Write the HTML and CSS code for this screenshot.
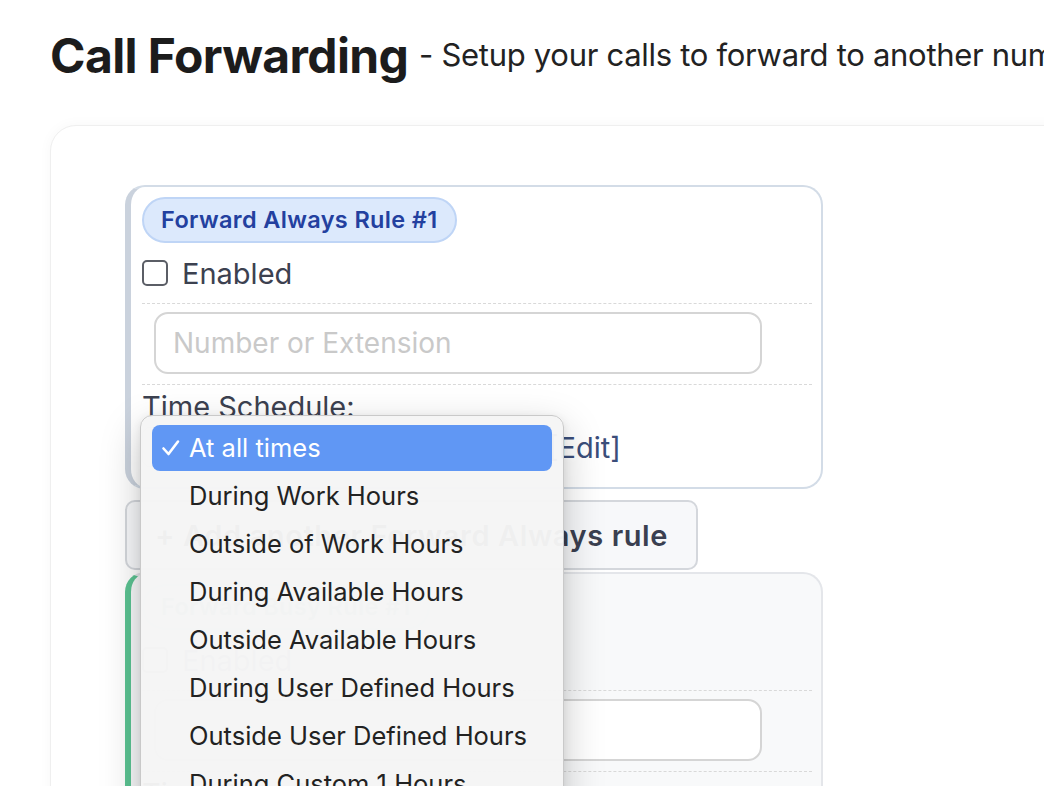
FILE: index.html
```html
<!DOCTYPE html>
<html lang="en">
<head>
    <meta charset="UTF-8">
    <meta name="viewport" content="width=device-width, initial-scale=1.0">
    <title>Call Forwarding</title>
    <link rel="stylesheet" href="styles.css">
</head>
<body>

    <h1 class="page-title">Call Forwarding <span class="page-sub">- Setup your calls to forward to another number or extension</span></h1>

    <div class="panel">

        <div class="rule rule-always">
            <span class="badge">Forward Always Rule #1</span>
            <label class="check-row"><input type="checkbox" class="check"> Enabled</label>
            <div class="field-row">
                <input type="text" class="number-input" placeholder="Number or Extension">
            </div>
            <div class="schedule">
                <div class="schedule-label">Time Schedule:</div>
                <div class="schedule-row">
                    <div class="select-box">At all times</div>
                    <a href="#" class="edit-link">[Edit]</a>
                </div>
            </div>

            <!-- open schedule picker -->
            <ul class="picker">
                <li class="picker-item selected">
                    <svg class="tick" width="20" height="18" viewBox="0 0 20 18"><path d="M2.5 9.5 L7.5 15 L17 2.5" fill="none" stroke="#fff" stroke-width="2.6" stroke-linecap="round" stroke-linejoin="round"/></svg>
                    At all times
                </li>
                <li class="picker-item">During Work Hours</li>
                <li class="picker-item">Outside of Work Hours</li>
                <li class="picker-item">During Available Hours</li>
                <li class="picker-item">Outside Available Hours</li>
                <li class="picker-item">During User Defined Hours</li>
                <li class="picker-item">Outside User Defined Hours</li>
                <li class="picker-item">During Custom 1 Hours</li>
                <li class="picker-item">Outside Custom 1 Hours</li>
            </ul>
        </div>

        <button class="add-btn">+ Add another Forward Always rule</button>

        <div class="rule rule-busy">
            <div class="faded">
                <span class="badge badge-green">Forward Busy Rule #1</span>
                <label class="check-row"><input type="checkbox" class="check"> Enabled</label>
            </div>
            <div class="field-row">
                <input type="text" class="number-input">
            </div>
            <div class="schedule">
                <div class="schedule-label">Time Schedule:</div>
            </div>
        </div>

    </div>

</body>
</html>
```

FILE: styles.css
```css
body {
    margin: 0;
    padding: 0 0 0 50px;
    font-family: Inter, "Noto Sans", sans-serif;
    background-color: #fff;
    color: #222;
    overflow: hidden;
}
.page-title {
    margin: 26px 0 0 0;
    font-size: 48px;
    line-height: 58px;
    font-weight: 700;
    letter-spacing: -0.6px;
    color: #1c1c1c;
    white-space: nowrap;
}
.page-sub {
    font-size: 31px;
    font-weight: 400;
    letter-spacing: -0.3px;
    color: #222;
    vertical-align: 7px;
}
.panel {
    margin-top: 40px;
    width: 1100px;
    padding: 59px 0 40px 74px;
    border: 1px solid #efefef;
    border-radius: 26px;
    box-shadow: 0 0 14px rgba(0, 0, 0, 0.035);
    background-color: #fff;
}
.rule {
    position: relative;
    width: 698px;
    box-sizing: border-box;
    padding: 10px 9px 0 11px;
    border: 2px solid #d3dce7;
    border-left: 6px solid #cad2dd;
    border-radius: 20px;
    background-color: #fff;
}
.rule-busy {
    margin-top: 2px;
    background-color: #f8f9fa;
    border-color: #e4e6ea;
    border-left-color: #5bc392;
    height: 260px;
}
.faded { opacity: 0.45; }
.badge {
    display: inline-block;
    height: 46px;
    line-height: 42px;
    box-sizing: border-box;
    padding: 0 17px;
    border: 2px solid #bfd5f6;
    border-radius: 23px;
    background-color: #dce9fc;
    color: #23409f;
    font-size: 23.5px;
    font-weight: 600;
    letter-spacing: 0.35px;
}
.badge-green {
    background-color: #d3f2e2;
    border-color: #b2e4ca;
    color: #1c7a4c;
}
.check-row {
    display: flex;
    align-items: center;
    gap: 14px;
    margin-top: 12px;
    height: 36px;
    font-size: 29px;
    color: #3c4150;
}
.check {
    appearance: none;
    -webkit-appearance: none;
    margin: 0;
    width: 26px;
    height: 26px;
    border: 2px solid #5b5e66;
    border-radius: 5px;
    background-color: #fff;
}
.field-row {
    margin-top: 12px;
    padding: 8px 0 10px 12px;
    border-top: 1px dashed #d9d9d9;
}
.number-input {
    width: 608px;
    height: 62px;
    box-sizing: border-box;
    padding: 0 17px;
    border: 2px solid #d5d5d5;
    border-radius: 14px;
    background-color: #fff;
    font-family: Inter, sans-serif;
    font-size: 28px;
    color: #333;
    outline: none;
}
.number-input::placeholder { color: #c9c9c9; }
.schedule {
    padding: 6px 0 18px 0;
    border-top: 1px dashed #d9d9d9;
    font-size: 29px;
    color: #3c4150;
}
.schedule-label {
    line-height: 32px;
}
.schedule-row {
    display: flex;
    align-items: center;
    gap: 6px;
    height: 44px;
    margin-top: 2px;
}
.select-box {
    width: 400px;
    height: 40px;
    line-height: 40px;
    padding-left: 12px;
    box-sizing: border-box;
    border: 1px solid #c8c8c8;
    border-radius: 8px;
    font-size: 22px;
}
.edit-link {
    color: #3b4e7a;
    text-decoration: none;
    font-size: 29px;
}
.add-btn {
    display: block;
    margin-top: 11px;
    height: 70px;
    padding: 0 28px;
    border: 2px solid #d4d7dc;
    border-radius: 10px;
    background-color: #f7f8fa;
    color: #3a3f50;
    font-family: Inter, sans-serif;
    font-size: 29px;
    font-weight: 600;
    letter-spacing: 0.6px;
    cursor: pointer;
}

/* popup list for the schedule select */
.picker {
    position: absolute;
    left: 9px;
    top: 228px;
    z-index: 5;
    width: 424px;
    height: 420px;
    box-sizing: border-box;
    margin: 0;
    padding: 9px 11px;
    list-style: none;
    border: 1px solid #c9c9c9;
    border-radius: 12px;
    background-color: rgba(245, 245, 245, 0.97);
    box-shadow: 0 14px 40px rgba(0, 0, 0, 0.22), 0 2px 8px rgba(0, 0, 0, 0.08);
}
.picker-item {
    position: relative;
    height: 46px;
    line-height: 46px;
    margin-bottom: 2px;
    padding-left: 37px;
    border-radius: 8px;
    font-size: 25.5px;
    color: #222;
}
.picker-item.selected {
    background-color: #6097f4;
    color: #fff;
}
.tick {
    position: absolute;
    left: 9px;
    top: 14px;
}
```
